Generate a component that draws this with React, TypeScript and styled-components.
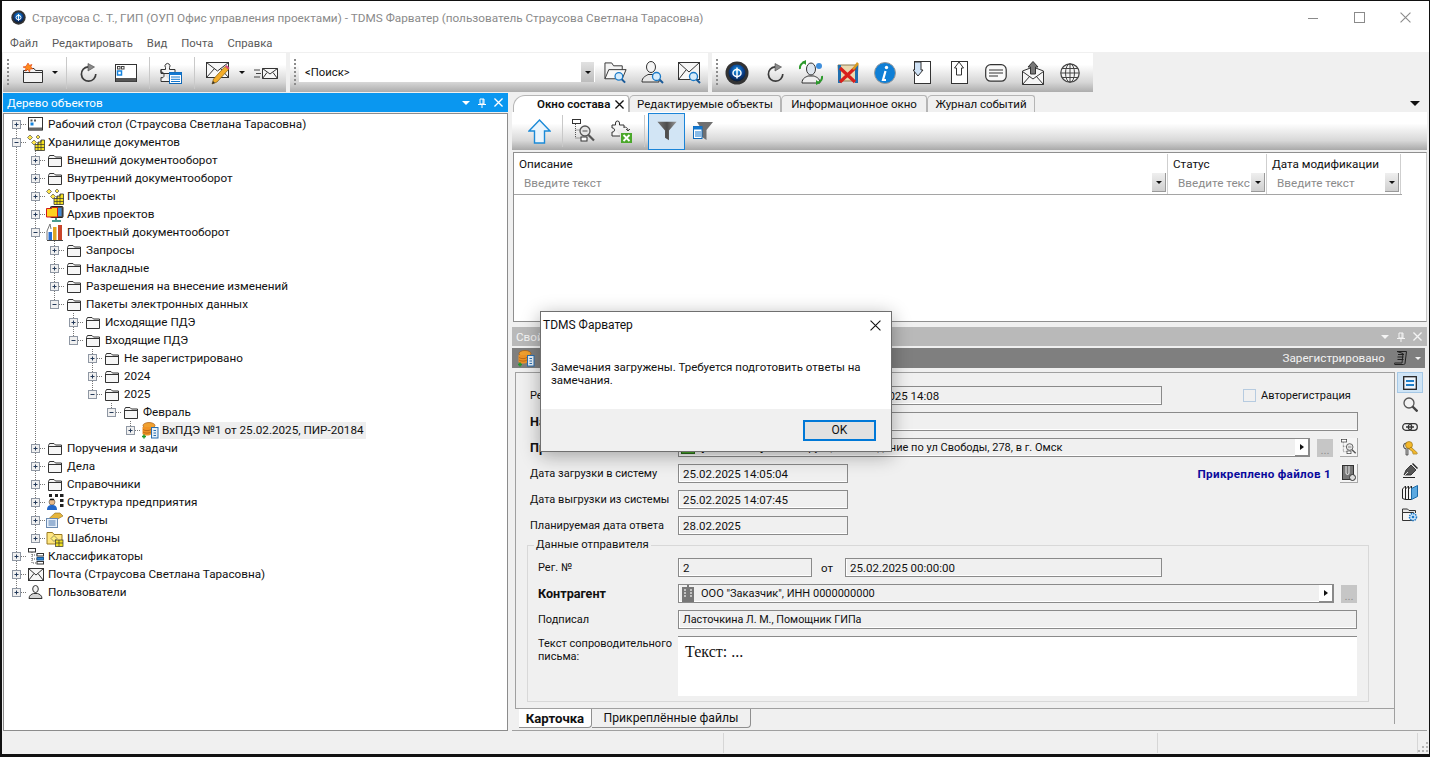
import React from "react";
import styled, {createGlobalStyle} from "styled-components";

const GlobalStyle = createGlobalStyle`
  html, body {
    margin: 0;
    padding: 0;
    background: #111;
  }
  * {
    box-sizing: border-box;
  }
`

const Window = styled.div`
  width: 1430px;
  height: 757px;
  display: flex;
  flex-direction: column;
  position: relative;
  overflow: hidden;
  background: #f0f0f0;
  border-style: solid;
  border-color: #111;
  border-width: 1px 1px 3px 2px;
  font-family: "Roboto", "Liberation Sans", sans-serif;
  font-size: 11.7px;
  color: #111;
`

const TitleBar = styled.div`
  height: 33px;
  flex: none;
  display: flex;
  align-items: center;
  background: #fff;
  padding-left: 9px;
  color: #8a8a8a;
  font-size: 11.75px;
`

const TitleText = styled.span`
  margin-left: 6px;
  flex: 1;
`

const WinButton = styled.div`
  width: 46px;
  height: 30px;
  display: flex;
  align-items: center;
  justify-content: center;
  margin-right: ${({$mr}: {$mr: number}) => $mr}px;
`

const MenuBar = styled.div`
  height: 18px;
  flex: none;
  display: flex;
  align-items: center;
  gap: 14px;
  padding-left: 8px;
  background: #fff;
  color: #5a5a5a;
  font-size: 11.3px;
`

const ToolStrip = styled.div`
  height: 41px;
  flex: none;
  display: flex;
  padding-left: 1px;
  background: #f0f0f0;
  padding-top: 1px;
`

const ToolSegment = styled.div`
  width: ${({$w}: {$w: number}) => $w}px;
  margin-right: 4px;
  height: 39px;
  display: flex;
  align-items: center;
  background: linear-gradient(#fff 0%, #fff 30%, #d6d6d6 75%, #adadad 100%);
`

const Grip = styled.div`
  width: 2px;
  height: 28px;
  margin-left: 4px;
  background: repeating-linear-gradient(#8c8c8c 0 2px, transparent 2px 4px);
`

const ToolButton = styled.div`
  flex: none;
  display: flex;
  align-items: center;
  justify-content: center;
  width: ${({$w}: {$w?: number, $ml?: number}) => $w ?? 24}px;
  height: 26px;
  margin-left: ${({$ml}: {$w?: number, $ml?: number}) => $ml ?? 0}px;
`

const ToolSep = styled.div`
  flex: none;
  width: 1px;
  height: 32px;
  background: #c9c9c9;
  margin-left: ${({$ml}: {$ml: number}) => $ml}px;
`

const SearchCombo = styled.div`
  width: 296px;
  height: 20px;
  margin-left: 3px;
  display: flex;
  align-items: center;
  justify-content: space-between;
  padding-left: 6px;
  background: #fff;
  margin-top: -1px;
  font-size: 11.3px;
`

const ComboArrow = styled.div`
  width: 13px;
  height: 20px;
  display: flex;
  align-items: center;
  justify-content: center;
  margin-right: 1px;
  background: linear-gradient(#e2e2e2, #bdbdbd);
`

const Caret = styled.span`
  width: 0;
  height: 0;
  flex: none;
  border-left: ${({$s, $c}: {$s: number, $c: string}) => $s}px solid transparent;
  border-right: ${({$s}: {$s: number, $c: string}) => $s}px solid transparent;
  border-top: ${({$s}: {$s: number, $c: string}) => $s}px solid ${({$c}: {$s: number, $c: string}) => $c};
`

const Main = styled.div`
  flex: 1;
  min-height: 0;
  display: flex;
`

const LeftPanel = styled.div`
  width: 505px;
  margin-left: 1px;
  flex: none;
  display: flex;
  flex-direction: column;
`

const DockHeader = styled.div`
  height: 19px;
  flex: none;
  display: flex;
  align-items: center;
  gap: 8px;
  padding: 0 5px 0 4px;
  background: ${({$blue}: {$blue: boolean}) => $blue ? "#0a97f0" : "#b9b9b9"};
  color: ${({$blue}: {$blue: boolean}) => $blue ? "#fff" : "#f4f4f4"};
`

const DockTitle = styled.span`
  flex: 1;
`

const TreeBox = styled.div`
  flex: 1;
  margin-top: 1px;
  border: 1px solid #8c8c8c;
  background: #fff;
  padding: 1px 0 0 3px;
`

const TreeRow = styled.div`
  height: 18px;
  display: flex;
  align-items: center;
`

const TreeIcon = styled.div`
  width: 19px;
  height: 18px;
  flex: none;
  display: flex;
  align-items: center;
  justify-content: center;
`

const TreeLabel = styled.span`
  margin-left: 1px;
  padding: 0 2px;
  height: 17px;
  line-height: 17px;
  white-space: nowrap;
  background: ${({$sel}: {$sel: boolean}) => $sel ? "#eeeeee" : "transparent"};
`

const RightPanel = styled.div`
  flex: 1;
  margin-left: 4px;
  margin-right: 3px;
  display: flex;
  flex-direction: column;
`

const TopPane = styled.div`
  height: 232px;
  flex: none;
  display: flex;
  flex-direction: column;
`

const TabStrip = styled.div`
  height: 19px;
  flex: none;
  padding-left: 1px;
  padding-top: 2px;
  display: flex;
  align-items: flex-end;
`

const DocTab = styled.div`
  height: 17px;
  width: ${({$w}: {$w: number, $on?: boolean}) => $w}px;
  flex: none;
  display: flex;
  align-items: center;
  justify-content: ${({$on}: {$w: number, $on?: boolean}) => $on ? "flex-start" : "center"};
  padding-left: ${({$on}: {$w: number, $on?: boolean}) => $on ? 23 : 0}px;
  gap: 5px;
  background: ${({$on}: {$w: number, $on?: boolean}) => $on ? "#fff" : "#f0f0f0"};
  border: 1px solid #b5b5b5;
  border-bottom: none;
  border-radius: ${({$on}: {$w: number, $on?: boolean}) => $on ? "12px 3px 0 0" : "5px 3px 0 0"};
  font-weight: ${({$on}: {$w: number, $on?: boolean}) => $on ? 600 : 400};
  font-size: 11.5px;
  white-space: nowrap;
`

const TabFill = styled.div`
  flex: 1;
  height: 17px;
  display: flex;
  align-items: center;
  justify-content: flex-end;
  padding-right: 7px;
`

const ContentBar = styled.div`
  height: 38px;
  flex: none;
  display: flex;
  align-items: center;
  background: linear-gradient(#fff 0%, #fff 30%, #d8d8d8 75%, #a9a9a9 100%);
`

const FilterToggle = styled.div`
  width: 37px;
  height: 37px;
  flex: none;
  margin-left: 3px;
  display: flex;
  align-items: center;
  justify-content: center;
  background: #d2e5f5;
  border: 1px solid #1a84d8;
`

const GridPane = styled.div`
  flex: 1;
  margin: 2px 0 3px 1px;
  background: #fff;
  border: 1px solid #8f8f8f;
  border-right-color: #c8c8c8;
  padding-top: 1px;
`

const GridHead = styled.div`
  display: flex;
  width: 888px;
  height: 41px;
  border-bottom: 1px solid #a5a5a5;
`

const GridCol = styled.div`
  width: ${({$w}: {$w: number}) => $w}px;
  flex: none;
  display: flex;
  flex-direction: column;
  border-right: 1px solid #cfcfcf;
  padding-left: 5px;
`

const GridTitle = styled.div`
  height: 19px;
  line-height: 21px;
`

const GridFilter = styled.div`
  height: 19px;
  display: flex;
  align-items: center;
  justify-content: space-between;
  padding-left: 5px;
  padding-right: 1px;
  color: #8b8b8b;
  overflow: hidden;
  white-space: nowrap;
`

const FilterArrow = styled.div`
  width: 14px;
  height: 19px;
  flex: none;
  display: flex;
  align-items: center;
  justify-content: center;
  background: linear-gradient(#efefef, #cfcfcf);
  border-right: 1px solid #9a9a9a;
  border-bottom: 1px solid #9a9a9a;
`

const PropsPane = styled.div`
  flex: 1;
  min-height: 0;
  display: flex;
  flex-direction: column;
  border-bottom: 1px solid #a0a0a0;
  padding-top: 2px;
`

const SubHeader = styled.div`
  height: 20px;
  flex: none;
  margin-top: 2px;
  margin-right: 2px;
  padding: 0 4px 0 5px;
  display: flex;
  align-items: center;
  gap: 5px;
  background: #7f7f7f;
  color: #f2f2f2;
`

const SubTitle = styled.span`
  flex: 1;
`

const SubState = styled.span`
  margin-right: 4px;
`

const SubCaret = styled.div`
  margin-left: 3px;
  display: flex;
`

const PropsBody = styled.div`
  flex: 1;
  min-height: 0;
  display: flex;
`

const CardColumn = styled.div`
  width: 879px;
  flex: none;
  margin-left: 3px;
  display: flex;
  flex-direction: column;
`

const FormCard = styled.div`
  flex: none;
  height: 337px;
  margin-top: 4px;
  border-top: 1px solid #a0a0a0;
  border-left: 1px solid #a0a0a0;
  border-bottom: 1px solid #a0a0a0;
  padding: 13px 36px 0 14px;
  display: flex;
  flex-direction: column;
  gap: 7px;
`

const FormRow = styled.div`
  height: 19px;
  flex: none;
  display: flex;
  align-items: center;
`

const FormLabel = styled.label`
  width: ${({$w}: {$w: number, $b?: boolean}) => $w}px;
  flex: none;
  line-height: 13px;
  font-size: ${({$b}: {$w: number, $b?: boolean}) => $b ? 12.6 : 11}px;
  font-weight: ${({$b}: {$w: number, $b?: boolean}) => $b ? 700 : 400};
`

const PlainLabel = styled(FormLabel)`
  white-space: nowrap;
`

const Field = styled.div`
  height: 19px;
  width: ${({$w}: {$w?: number}) => $w ? `${$w}px` : "auto"};
  flex: ${({$w}: {$w?: number}) => $w ? "none" : 1};
  display: flex;
  align-items: center;
  padding-left: 4px;
  background: #f0f0f0;
  border: 1px solid #8a8a8a;
  box-shadow: inset 1px -1px 0 #fff;
  font-size: 11.5px;
  white-space: nowrap;
  overflow: hidden;
`

const NameField = styled(Field)`
  font-size: 10.8px;
`

const RefField = styled(Field)`
  padding-left: 2px;
  padding-right: 0;
  gap: 6px;
`

const RefText = styled.span`
  flex: 1;
  font-size: 11px;
`

const RefArrow = styled.div`
  width: 14px;
  height: 17px;
  flex: none;
  display: flex;
  align-items: center;
  justify-content: center;
  background: #fff;
  border-right: 1px solid #8a8a8a;
  border-bottom: 1px solid #8a8a8a;
`

const Tri = styled.span`
  width: 0;
  height: 0;
  border-top: 3px solid transparent;
  border-bottom: 3px solid transparent;
  border-left: 4px solid #111;
`

const DotsButton = styled.div`
  width: 16px;
  height: 18px;
  flex: none;
  margin-left: 7px;
  display: flex;
  align-items: flex-end;
  justify-content: center;
  background: #c6c6c6;
  color: #8f8f8f;
  line-height: 14px;
`

const IconButton = styled.div`
  width: 18px;
  height: 19px;
  flex: none;
  margin-left: ${({$ml}: {$ml: number}) => $ml}px;
  display: flex;
  align-items: center;
  justify-content: center;
  background: #f5f5f5;
  border-right: 1px solid #a8a8a8;
  border-bottom: 1px solid #a8a8a8;
`

const FromLabel = styled.span`
  width: 33px;
  flex: none;
  padding-left: 9px;
  font-size: 11.5px;
`

const AutoCheck = styled.div`
  width: 13px;
  height: 13px;
  flex: none;
  margin-left: 81px;
  border: 1px solid #b6cbe0;
  background: #f0f0f0;
`

const AutoLabel = styled.span`
  margin-left: 5px;
  font-size: 11px;
`

const AttachLink = styled.span`
  flex: 1;
  text-align: right;
  font-weight: 700;
  color: #0a0a9c;
  letter-spacing: 0.3px;
`

const SenderGroup = styled.fieldset`
  margin: -4px -11px 0 -3px;
  height: 164px;
  padding: 6px 11px 0 10px;
  border: 1px solid #d8d8d8;
  display: flex;
  flex-direction: column;
  gap: 7px;
`

const SenderLegend = styled.legend`
  margin-left: -4px;
  padding: 0 2px;
  line-height: 14px;
  font-size: 11.3px;
`

const LetterRow = styled.div`
  height: 60px;
  flex: none;
  display: flex;
  padding-top: 1px;
`

const LetterBox = styled.div`
  flex: 1;
  margin-top: -1px;
  background: #fff;
  border-top: 1px solid #8a8a8a;
  padding: 6px 0 0 7px;
  font-family: "Liberation Serif", serif;
  font-size: 16px;
`

const CardTabs = styled.div`
  display: flex;
  padding-left: 4px;
  margin-top: 0;
`

const CardTab = styled.div`
  height: 19px;
  width: ${({$w}: {$w: number, $on?: boolean}) => $w}px;
  display: flex;
  align-items: center;
  justify-content: center;
  background: ${({$on}: {$w: number, $on?: boolean}) => $on ? "#fff" : "#f0f0f0"};
  font-weight: ${({$on}: {$w: number, $on?: boolean}) => $on ? 700 : 400};
  border-right: 1px solid #8f8f8f;
  border-bottom: 1px solid #8f8f8f;
  border-radius: 0 0 4px 0;
  font-size: ${({$on}: {$w: number, $on?: boolean}) => $on ? 13.2 : 12.2}px;
`

const SideBar = styled.div`
  width: 33px;
  flex: none;
  margin-top: 4px;
  margin-bottom: 6px;
  border-left: 1px solid #a0a0a0;
  padding-left: 2px;
  display: flex;
  flex-direction: column;
  gap: 1px;
`

const SideButton = styled.div`
  width: 26px;
  height: 21px;
  flex: none;
  display: flex;
  align-items: center;
  justify-content: center;
  background: ${({$on}: {$on?: boolean}) => $on ? "#cfe4f5" : "transparent"};
  border: 1px solid ${({$on}: {$on?: boolean}) => $on ? "#a5c8e6" : "transparent"};
`

const StatusBar = styled.div`
  height: 23px;
  flex: none;
  display: flex;
  align-items: center;
  padding-left: 721px;
`

const StatusCell = styled.div`
  width: ${({$w}: {$w: number}) => $w}px;
  height: 20px;
  flex: none;
  border-left: 1px solid #d6d6d6;
`

const SizeGrip = styled.div`
  flex: 1;
  height: 20px;
  display: flex;
  justify-content: flex-end;
  align-items: flex-end;
  border-left: 1px solid #d6d6d6;
  padding-right: 2px;
`

const Dialog = styled.div`
  position: absolute;
  left: 538px;
  top: 310px;
  width: 352px;
  height: 141px;
  display: flex;
  flex-direction: column;
  background: #fff;
  border: 1px solid #6f6f6f;
  box-shadow: 0 4px 18px rgba(0, 0, 0, 0.32);
`

const DialogTitle = styled.div`
  height: 26px;
  flex: none;
  display: flex;
  align-items: center;
  justify-content: space-between;
  padding: 0 10px 0 2px;
  font-size: 12px;
`

const DialogBody = styled.div`
  flex: 1;
  padding: 23px 24px 0 10px;
  line-height: 13px;
  font-size: 11.5px;
`

const DialogFooter = styled.div`
  height: 42px;
  flex: none;
  display: flex;
  align-items: center;
  justify-content: flex-end;
  padding-right: 15px;
  background: #f0f0f0;
`

const OkButton = styled.button`
  width: 73px;
  height: 21px;
  padding: 0;
  font: inherit;
  font-size: 12px;
  color: #111;
  background: #e1e1e1;
  border: 2px solid #0078d7;
`

type TreeNode = { l: number, t: string, i: string, open?: boolean, sel?: boolean }

const Ln = "#333";

function Folder() {
    return <svg width="16" height="13" viewBox="0 0 16 13"><path d="M1.500 12.500V3.500L2.500 1.500H7L8.500 3H14.500V12.500Z" fill="#f6f6f6" stroke={Ln}/><path d="M1.500 4.500H14.500" stroke={Ln}/></svg>;
}

function Cubes() {
    return <svg width="18" height="17" viewBox="0 0 18 17">
        <path d="M2 1l2.500 2.500L2 6-.5 3.500z M10 1l2 2-2 2-2-2z M6 6l2.500 2.500L6 11 3.500 8.500z" transform="translate(1 0)" fill="#ffe64d" stroke="#555" strokeWidth=".7"/>
        <path d="M8 10.500h3V8h3V6h3.500v10.500H8z" fill="#f6e220" stroke="#333" strokeWidth=".8"/>
        <path d="M8 13.500h9.500M11 8v8.500M14 6v10.500M11 10.500h6.500" stroke="#333" strokeWidth=".7"/>
    </svg>;
}

function Desktop() {
    return <svg width="15" height="14" viewBox="0 0 15 14"><rect x=".5" y=".5" width="14" height="12.500" fill="#fff" stroke={Ln}/><rect x="1" y="10.500" width="13" height="3" fill="#666"/><rect x="2.500" y="2.500" width="2" height="2" fill="#555"/><rect x="6" y="2.500" width="2" height="2" fill="#555"/><rect x="2.500" y="5.500" width="3" height="3" fill="#1583dd"/></svg>;
}

function Monitors() {
    return <svg width="18" height="17" viewBox="0 0 18 17"><rect x="4.500" y=".5" width="12.500" height="11" rx="1" fill="#555" stroke="#222"/><rect x="6" y="2" width="9.500" height="8" fill="#3f87d6"/><path d="M.5 2.500h5l1-1h5v9.500H.5z" fill="#ffd21e" stroke="#d01818"/><path d="M10 12v2M6 15h9" stroke="#0f7c6c" strokeWidth="1.500"/></svg>;
}

function Chart() {
    return <svg width="18" height="18" viewBox="0 0 18 18"><path d="M1 17V8l3-7 1 5" fill="none" stroke="#777"/><rect x="2.500" y="9" width="3.500" height="8" fill="#2a6fd0"/><rect x="7" y="4" width="3.500" height="13" fill="#e0a420"/><rect x="12" y="2" width="4" height="15" fill="#c8452a"/><path d="M1 17.500h16" stroke="#444"/></svg>;
}

function Package() {
    return <svg width="18" height="18" viewBox="0 0 18 18"><ellipse cx="8" cy="4.500" rx="6" ry="3" fill="#f0a030" stroke="#a85a10" strokeWidth=".7"/><path d="M1.500 6v7c2 2 7 2 9 0V6z" fill="#ef9326"/><path d="M2 8.500c2 1.500 6 1.500 8 0M2 11c2 1.500 6 1.500 8 0" stroke="#a85a10" fill="none" strokeWidth=".7"/><rect x="10.500" y="6.500" width="6.500" height="10.500" fill="#e8f0f8" stroke="#2a6fb0"/><path d="M12.500 9.500h2.500M12.500 12h2.500M12.500 14.500h2.500" stroke="#2a6fb0"/><path d="M1 15.500h4M3 13.500v4" stroke="#1f9a2b" strokeWidth="1.500"/></svg>;
}

function OrgChart() {
    return <svg width="18" height="18" viewBox="0 0 18 18"><circle cx="6" cy="9" r="3" fill="#e7b98a" stroke="#333" strokeWidth=".5"/><path d="M1 17c0-4 2-5 5-5s5 1 5 5z" fill="#2367c8"/><path d="M4 6.500h4" stroke="#111" strokeWidth="1.500"/><rect x="3" y="1" width="3" height="3" fill="#222"/><rect x="9" y="1" width="3" height="3" fill="#222"/><rect x="14" y="1" width="3.500" height="3" fill="#222"/><rect x="14" y="6" width="3.500" height="3" fill="#222"/><rect x="14" y="11" width="3.500" height="3" fill="#222"/></svg>;
}

function Report() {
    return <svg width="18" height="16" viewBox="0 0 18 16"><path d="M3 6.500L9 1h5l3 3-7 4z" fill="#e6b53a" stroke="#8a6a20" strokeWidth=".6"/><rect x=".5" y="6.500" width="11" height="9" fill="#e8f0fa" stroke="#6a8ab0"/><path d="M2.500 9h7M2.500 11h7M2.500 13h7" stroke="#4a78b0"/></svg>;
}

function TemplateFolder() {
    return <svg width="18" height="17" viewBox="0 0 18 17"><path d="M1 14V2.500h5.500l1.500 2h8V14z" fill="#ffe680" stroke="#9a7a20"/><path d="M5 8.500l3-3 3 3-3 3z" fill="#fff07a" stroke="#555" strokeWidth=".6"/><rect x="9.500" y="10" width="7.500" height="6.500" fill="#f1e020" stroke="#333" strokeWidth=".7"/><path d="M13 10v6.500M9.500 13h7.500" stroke="#333" strokeWidth=".7"/></svg>;
}

function Classifier() {
    return <svg width="16" height="17" viewBox="0 0 16 17"><rect x=".5" y=".5" width="7" height="3.500" fill="#fff" stroke={Ln}/><rect x="9" y="5.500" width="6.500" height="2.500" fill="#fff" stroke={Ln}/><rect x="9" y="9.500" width="6.500" height="2.500" fill="#2b87d8" stroke="#1a5a98"/><rect x="9" y="13.500" width="6.500" height="2.500" fill="#fff" stroke={Ln}/><path d="M4 4v11h5M4 7h5M4 11h5" stroke="#555" strokeDasharray="1 1" fill="none"/></svg>;
}

function Mail({w = 16, h = 13}: { w?: number, h?: number }) {
    return <svg width={w} height={h} viewBox="0 0 16 13"><rect x=".5" y=".5" width="15" height="12" fill="#f6f6f6" stroke={Ln}/><path d="M.5.5L8 7l7.500-6.500M.5 12.500L6 5.500M15.500 12.500L10 5.500" fill="none" stroke={Ln}/></svg>;
}

function User({w = 15, h = 14}: { w?: number, h?: number }) {
    return <svg width={w} height={h} viewBox="0 0 15 14"><ellipse cx="7.500" cy="4" rx="2.800" ry="3.500" fill="#f4f4f4" stroke={Ln}/><path d="M1 13.500c0-3.500 3-4.500 4.500-5h4c1.500.5 4.500 1.500 4.500 5z" fill="#d4d4d4" stroke={Ln}/></svg>;
}

function NewFolderIcon() {
    return <svg width="22" height="22" viewBox="0 0 22 22"><path d="M1.500 20.500V8.500h3l1.500-2h6l1.500 2h7v12z" fill="#f3f3f3" stroke={Ln}/><path d="M1.500 10.500h19.500" stroke={Ln}/><path d="M6 1l1.300 2.300L10 2.500 8.800 5l2.200 1.800-2.800.3L7.500 10 6 7.500 3 9l1-2.800L1 5l3-.7z" fill="#ff8a1c" stroke="#e04010" strokeWidth=".6"/></svg>;
}

function RefreshIcon({w = 18, h = 20}: { w?: number, h?: number }) {
    return <svg width={w} height={h} viewBox="0 0 18 20"><path d="M8 3.800A7.200 7.200 0 1 0 15.800 11" fill="none" stroke="#3c3c3c" strokeWidth="1.700"/><path d="M8 .5L14.500 4 8 8z" fill="#8b8b8b" stroke="#444" strokeWidth=".6"/></svg>;
}

function WindowIcon() {
    return <svg width="22" height="18" viewBox="0 0 22 18"><rect x=".5" y=".5" width="21" height="17" fill="#fff" stroke={Ln}/><rect x="1" y="14" width="20" height="3.500" fill="#555"/><rect x="2.500" y="2.500" width="2.500" height="2.500" fill="none" stroke="#444"/><rect x="6.500" y="2.500" width="2.500" height="2.500" fill="none" stroke="#444"/><rect x="2.500" y="7" width="4" height="4" fill="#fff" stroke="#1583dd" strokeWidth="1.500"/></svg>;
}

function PuzzleBlock() {
    return <svg width="22" height="23" viewBox="0 0 22 23"><path d="M1 8.500h4.500v-2a2.500 2.500 0 1 1 4 0v2H15v4H1zM1 8.500v3a2 2 0 0 1 3 2v1a2 2 0 0 1-3 2v4h9" fill="#f5f5f5" stroke={Ln}/><rect x="9.500" y="11.500" width="12" height="11" fill="#fff" stroke="#0f68b8"/><rect x="9.500" y="11.500" width="12" height="2.500" fill="#1478d0"/><path d="M11 16h9M11 18.300h9M11 20.500h9" stroke="#1478d0"/></svg>;
}

function MailPencil() {
    return <svg width="24" height="24" viewBox="0 0 24 24"><rect x=".5" y="1.500" width="22" height="15" fill="#f8f8f8" stroke={Ln}/><path d="M.5 1.500L11.500 10l11-8.500M.5 16.500l8-9M22.500 16.500l-8-9" fill="none" stroke={Ln}/><path d="M6 23l1.500-5L19 5.500l3.500 3L11 21z" fill="#f3ad2a" stroke="#7a5a10" strokeWidth=".7"/><path d="M19 5.500l1.500-1.500 3 3-1 1.500z" fill="#d84a7a"/><path d="M6 23l1-3 2 2z" fill="#333"/></svg>;
}

function MailSend() {
    return <svg width="24" height="16" viewBox="0 0 24 16"><path d="M8.500 3.500h15v10h-15z" fill="#f6f6f6" stroke={Ln}/><path d="M8.500 3.500L16 9l7.500-5.500M8.500 13.500L13 7.500M23.500 13.500L19 7.500" fill="none" stroke={Ln}/><path d="M0 5h6M2 8.500h5M0 12h6" stroke="#444"/></svg>;
}

function Lens({x, y}: { x: number, y: number }) {
    return <g transform={`translate(${x} ${y})`}><circle cx="4.500" cy="4.500" r="4" fill="#d7ecfb" stroke="#1a7ac8" strokeWidth="1.300"/><path d="M7.500 7.500L11 11" stroke="#1a5a98" strokeWidth="2"/></g>;
}

function FolderSearch() {
    return <svg width="25" height="24" viewBox="0 0 25 24"><path d="M1 18V1.500h7l2 3h9v4" fill="#f4f4f4" stroke={Ln}/><path d="M1 18l4-9.500h18L19 18z" fill="#f8f8f8" stroke={Ln}/><Lens x={11} y={11}/></svg>;
}

function UserSearch() {
    return <svg width="24" height="24" viewBox="0 0 24 24"><ellipse cx="10" cy="6" rx="4.500" ry="5.500" fill="#f4f4f4" stroke={Ln}/><path d="M1 21c0-5 4-6 6-7.500h6c2 1 5 3 5 7.500z" fill="#e8e8e8" stroke={Ln}/><Lens x={11} y={11}/></svg>;
}

function MailSearch() {
    return <svg width="24" height="24" viewBox="0 0 24 24"><rect x=".5" y="1.500" width="21" height="17" fill="#f6f6f6" stroke={Ln}/><path d="M.5 1.500L11 11 21.500 1.500M.5 18.500L8 9" fill="none" stroke={Ln}/><Lens x={11} y={11}/></svg>;
}

function FarvaterLogo({s = 24}: { s?: number }) {
    return <svg width={s} height={s} viewBox="0 0 24 24"><defs><radialGradient id="fv" cx=".5" cy=".35" r=".65"><stop offset="0" stopColor="#1ea0f0"/><stop offset=".6" stopColor="#0a3f8c"/><stop offset="1" stopColor="#0a1a30"/></radialGradient></defs><circle cx="12" cy="12" r="11.500" fill="#333"/><circle cx="12" cy="12" r="8.500" fill="url(#fv)"/><ellipse cx="12" cy="12" rx="4" ry="3.500" fill="none" stroke="#fff" strokeWidth="1.500"/><path d="M12 6.500v11" stroke="#fff" strokeWidth="1.500"/></svg>;
}

function UserSync() {
    return <svg width="24" height="25" viewBox="0 0 24 25"><ellipse cx="12" cy="9" rx="4.500" ry="6" fill="#dfe6ee" stroke={Ln}/><path d="M3 23c0-5 4-6 6-7h6c2 1 6 2 6 7z" fill="#eee" stroke={Ln}/><path d="M1 9a6 6 0 0 1 6-7" fill="none" stroke="#2c9a2c" strokeWidth="2"/><path d="M7 0v5L3 2z" fill="#2c9a2c"/><path d="M23 16a6 6 0 0 1-6 7" fill="none" stroke="#2c9a2c" strokeWidth="2"/><path d="M17 25v-5l4 3z" fill="#2c9a2c"/><circle cx="20" cy="6" r="3" fill="#3f8fdc"/></svg>;
}

function RedCross() {
    return <svg width="23" height="24" viewBox="0 0 23 24"><path d="M1 4h20l-1 16H2z" fill="#ead9b0" stroke="#8a7a50"/><rect x="1" y="4" width="3" height="18" fill="#1f6fb0"/><rect x="18" y="4" width="3" height="18" fill="#1f6fb0"/><path d="M3 7l15 14M18 7L3 21" stroke="#d8201c" strokeWidth="3.200"/><path d="M15 8l5-7 2 2-5 6z" fill="#d89a20"/></svg>;
}

function InfoIcon() {
    return <svg width="22" height="22" viewBox="0 0 22 22"><circle cx="11" cy="11" r="10.500" fill="#0f7fd6" stroke="#9a9a9a"/><circle cx="12.500" cy="5.500" r="1.700" fill="#fff"/><path d="M11.500 9L9 18h3" fill="none" stroke="#fff" strokeWidth="2.200"/></svg>;
}

function DocDown() {
    return <svg width="18" height="24" viewBox="0 0 18 24"><rect x="1.500" y=".5" width="16" height="22" fill="#fff" stroke={Ln}/><path d="M1.500 1v8H0l5 6 5-6H8V1z" fill="#cfe2f6" stroke={Ln}/></svg>;
}

function DocUp() {
    return <svg width="17" height="24" viewBox="0 0 17 24"><rect x=".5" y=".5" width="16" height="22" fill="#fff" stroke={Ln}/><path d="M8 1l4.500 6H10.500v7h-5V7H3.500z" fill="#fff" stroke={Ln}/></svg>;
}

function Comment() {
    return <svg width="22" height="18" viewBox="0 0 22 18"><rect x=".7" y=".7" width="20.500" height="16.500" rx="5" fill="#f9f9f9" stroke={Ln} strokeWidth="1.200"/><path d="M4 6h14M4 9h14M4 12h9" stroke={Ln}/></svg>;
}

function MailUp() {
    return <svg width="22" height="24" viewBox="0 0 22 24"><path d="M.5 10L11 6l10.500 4v13.500H.5z" fill="#f6f6f6" stroke={Ln}/><path d="M.5 10.500L11 18l10.500-7.500M.5 23.500L8 15M21.500 23.500L14 15" fill="none" stroke={Ln}/><path d="M11 .5L16 6h-2.500v7h-5V6H6z" fill="#777" stroke="#333"/></svg>;
}

function Globe() {
    return <svg width="20" height="20" viewBox="0 0 20 20" fill="none" stroke="#444"><circle cx="10" cy="10" r="9.200" fill="#f4f4f4" strokeWidth="1.200"/><ellipse cx="10" cy="10" rx="4.500" ry="9.200"/><path d="M10 1v18M1 10h18M2 5.500h16M2 14.500h16"/></svg>;
}

function UpArrow() {
    return <svg width="23" height="25" viewBox="0 0 23 25"><path d="M11.500 1L22 12h-5.500v12h-10V12H1z" fill="#eaf5fd" stroke="#1a8ad8" strokeWidth="1.400"/></svg>;
}

function TreeSearch({w = 24, h = 24}: { w?: number, h?: number }) {
    return <svg width={w} height={h} viewBox="0 0 24 24"><rect x=".5" y=".5" width="8" height="4" fill="#fff" stroke={Ln}/><path d="M3.500 5v14h6M3.500 11h5" stroke="#555" strokeDasharray="1 1" fill="none"/><rect x="9" y="18" width="6" height="4" fill="#fff" stroke={Ln}/><circle cx="13" cy="12" r="5" fill="#e6e6e6" stroke="#555" strokeWidth="1.300"/><path d="M10.500 12h5" stroke="#555"/><path d="M16.500 16l5.500 5.500" stroke="#555" strokeWidth="2.200"/></svg>;
}

function PuzzleExcel() {
    return <svg width="21" height="24" viewBox="0 0 21 24"><path d="M1 6h3.500V4a2 2 0 1 1 4 0v2H13v3M1 6v3a2 2 0 0 1 2.500 2 2 2 0 0 1-2.500 2v4h8" fill="#f5f5f5" stroke={Ln}/><path d="M13 8c2 0 4 1 4 3M15 10l2 2 2-2" fill="none" stroke="#444"/><rect x="10" y="14" width="11" height="10" fill="#4aa82a"/><path d="M12.500 16l6 6M18.500 16l-6 6" stroke="#fff" strokeWidth="1.800"/></svg>;
}

function FilterIcon({w = 20, h = 20}: { w?: number, h?: number }) {
    return <svg width={w} height={h} viewBox="0 0 25 25"><defs><linearGradient id="fl" x1="0" x2="1" y1="0" y2="0"><stop offset="0" stopColor="#777"/><stop offset=".5" stopColor="#4c4c4c"/><stop offset="1" stopColor="#999"/></linearGradient></defs><path d="M.5 1h24L15 12v12l-5-3v-9z" fill="url(#fl)"/></svg>;
}

function FilterDoc() {
    return <svg width="20" height="20" viewBox="0 0 20 20"><path d="M4 1h16l-6.500 8v10L9 16V9z" fill="#707070"/><rect x=".5" y="5.500" width="8.500" height="12" fill="#fff" stroke="#0f68b8"/><rect x=".5" y="5.500" width="8.500" height="3" fill="#1478d0"/><path d="M2 11h6M2 13h6M2 15h6" stroke="#1478d0"/></svg>;
}

function DocScroll() {
    return <svg width="13" height="14" viewBox="0 0 13 14"><path d="M3 .5h9.500L11 12.500c-.3 1-1 1-1.500 1H1c-.5 0-1-.5-.5-1.500H8L9 2.500z" fill="#7f7f7f" stroke="#222"/><path d="M4 3.500h6M3.500 6h6M3.500 8.500h6" stroke="#222"/></svg>;
}

function CardIcon() {
    return <svg width="14" height="14" viewBox="0 0 14 14"><rect x=".7" y=".7" width="12.600" height="12.600" fill="#eef5fb" stroke="#222" strokeWidth="1.300"/><rect x="3" y="4" width="8" height="2" fill="#1f7fc8"/><rect x="3" y="8" width="8" height="2" fill="#1f7fc8"/></svg>;
}

function Magnifier() {
    return <svg width="15" height="15" viewBox="0 0 15 15"><circle cx="6" cy="6" r="5" fill="#f2f2f2" stroke="#555" strokeWidth="1.300"/><path d="M9.500 9.500l5 5" stroke="#444" strokeWidth="2.400"/></svg>;
}

function LinkIcon() {
    return <svg width="16" height="8" viewBox="0 0 16 8" fill="none" stroke="#333" strokeWidth="1.200"><rect x=".7" y=".7" width="9" height="6.600" rx="3"/><rect x="6.300" y=".7" width="9" height="6.600" rx="3"/><path d="M4 4h8" strokeWidth="1.500"/></svg>;
}

function KeyIcon() {
    return <svg width="15" height="15" viewBox="0 0 15 15"><circle cx="3.500" cy="5" r="3" fill="#ddd" stroke="#444"/><path d="M5 7v7l-2 0V8" fill="#bbb" stroke="#444" strokeWidth=".8"/><circle cx="6" cy="4" r="3.500" fill="#f3b72a" stroke="#8a6a10" strokeWidth=".6"/><path d="M8 6l6.500 6-1.500 1.500-1-1-1 1-1.500-1.500 .5-1L6 8z" fill="#f3b72a" stroke="#8a6a10" strokeWidth=".6"/></svg>;
}

function PenIcon() {
    return <svg width="15" height="15" viewBox="0 0 15 15"><path d="M1 12l2-5 5-5 5 5-5 5z" fill="#555" stroke="#222" strokeWidth=".8"/><path d="M9 1l1-1 5 5-1 1z" fill="#222"/><path d="M0 14.500h12" stroke="#222" strokeWidth="1"/><path d="M1 13l4-4" stroke="#ddd"/></svg>;
}

function BooksIcon() {
    return <svg width="16" height="15" viewBox="0 0 16 15"><path d="M.5 4l3-3v13.500l-3-1zM3.500 4l3-3v13.500h-3zM6.500 4l3-3v13.500h-3z" fill="#f6f6f6" stroke="#222"/><path d="M9.500 3.500l6-3v11l-6 3z" fill="#5aa8e0" stroke="#1a6aa8"/></svg>;
}

function FolderGear() {
    return <svg width="16" height="15" viewBox="0 0 16 15"><path d="M.5 13V2h5l1.500 1.500h6.500V6" fill="#e6e6e6" stroke="#333"/><path d="M.5 5.500h11v8H.5z" fill="#f4f4f4" stroke="#333"/><circle cx="11" cy="10" r="3.500" fill="#cfe6fa" stroke="#1a78c8" strokeWidth="1.500" strokeDasharray="1.500 .8"/><circle cx="11" cy="10" r="1.300" fill="#1a78c8"/></svg>;
}

function Pin({c}: { c: string }) {
    return <svg width="8" height="10" viewBox="0 0 8 10" fill="none" stroke={c}><path d="M2 1h4v5H2zM0 6.500h8M4 6.500V10M5 1v5" /></svg>;
}

function Cross({s, c, w = 1.500}: { s: number, c: string, w?: number }) {
    return <svg width={s} height={s} viewBox="0 0 10 10" stroke={c} strokeWidth={w}><path d="M.5.5l9 9M9.500.5l-9 9"/></svg>;
}

const treeIcons: Record<string, React.ReactNode> = {
    desktop: <Desktop/>, cubes: <Cubes/>, folder: <Folder/>, monitors: <Monitors/>, chart: <Chart/>,
    pack: <Package/>, org: <OrgChart/>, report: <Report/>, tpl: <TemplateFolder/>,
    tree: <Classifier/>, mail: <Mail/>, user: <User/>,
};

const nodes: TreeNode[] = [
    {l: 0, t: "Рабочий стол (Страусова Светлана Тарасовна)", i: "desktop"},
    {l: 0, t: "Хранилище документов", i: "cubes", open: true},
    {l: 1, t: "Внешний документооборот", i: "folder"},
    {l: 1, t: "Внутренний документооборот", i: "folder"},
    {l: 1, t: "Проекты", i: "cubes"},
    {l: 1, t: "Архив проектов", i: "monitors"},
    {l: 1, t: "Проектный документооборот", i: "chart", open: true},
    {l: 2, t: "Запросы", i: "folder"},
    {l: 2, t: "Накладные", i: "folder"},
    {l: 2, t: "Разрешения на внесение изменений", i: "folder"},
    {l: 2, t: "Пакеты электронных данных", i: "folder", open: true},
    {l: 3, t: "Исходящие ПДЭ", i: "folder"},
    {l: 3, t: "Входящие ПДЭ", i: "folder", open: true},
    {l: 4, t: "Не зарегистрировано", i: "folder"},
    {l: 4, t: "2024", i: "folder"},
    {l: 4, t: "2025", i: "folder", open: true},
    {l: 5, t: "Февраль", i: "folder", open: true},
    {l: 6, t: "ВхПДЭ №1 от 25.02.2025, ПИР-20184", i: "pack", sel: true},
    {l: 1, t: "Поручения и задачи", i: "folder"},
    {l: 1, t: "Дела", i: "folder"},
    {l: 1, t: "Справочники", i: "folder"},
    {l: 1, t: "Структура предприятия", i: "org"},
    {l: 1, t: "Отчеты", i: "report"},
    {l: 1, t: "Шаблоны", i: "tpl"},
    {l: 0, t: "Классификаторы", i: "tree"},
    {l: 0, t: "Почта (Страусова Светлана Тарасовна)", i: "mail"},
    {l: 0, t: "Пользователи", i: "user"},
];

// is there another node of this level further down under the same parent
function hasNext(index: number, level: number) {
    for (let j = index + 1; j < nodes.length; j++) {
        if (nodes[j].l < level) return false;
        if (nodes[j].l === level) return true;
    }
    return false;
}

function TreeGuide({on}: { on: boolean }) {
    return <svg width="19" height="18" style={{flex: "none"}}>{on && <path d="M9.500 0V18" stroke="#777" strokeDasharray="1 1"/>}</svg>;
}

function TreeToggle({open, top, bottom}: { open?: boolean, top: boolean, bottom: boolean }) {
    return <svg width="19" height="18" viewBox="0 0 19 18" style={{flex: "none"}}>
        {top && <path d="M9.500 0V5" stroke="#777" strokeDasharray="1 1"/>}
        {bottom && <path d="M9.500 14V18" stroke="#777" strokeDasharray="1 1"/>}
        <path d="M14 9.500H19" stroke="#777" strokeDasharray="1 1"/>
        <rect x="5.500" y="5.500" width="8" height="8" fill="#f0f0f0" stroke="#8f97a3"/>
        <path d={open ? "M7.500 9.500H11.500" : "M7.500 9.500H11.500M9.500 7.500V11.500"} stroke="#243a5a"/>
    </svg>;
}

function Tree() {
    return (
        <TreeBox>
            {nodes.map((n, i) => (
                <TreeRow key={i}>
                    {Array.from({length: n.l}, (_, level) => <TreeGuide key={level} on={hasNext(i, level)}/>)}
                    <TreeToggle open={n.open} top={i > 0} bottom={hasNext(i, n.l)}/>
                    <TreeIcon>{treeIcons[n.i]}</TreeIcon>
                    <TreeLabel $sel={!!n.sel}>{n.t}</TreeLabel>
                </TreeRow>
            ))}
        </TreeBox>
    );
}

function Toolbars() {
    return (
        <ToolStrip>
            <ToolSegment $w={283}>
                <Grip/>
                <ToolButton $w={24} $ml={12}><NewFolderIcon/></ToolButton>
                <ToolButton $w={8} $ml={6}><Caret $s={3} $c="#111"/></ToolButton>
                <ToolSep $ml={7}/>
                <ToolButton $ml={10}><RefreshIcon/></ToolButton>
                <ToolButton $ml={13}><WindowIcon/></ToolButton>
                <ToolSep $ml={11}/>
                <ToolButton $ml={9}><PuzzleBlock/></ToolButton>
                <ToolSep $ml={11}/>
                <ToolButton $ml={11}><MailPencil/></ToolButton>
                <ToolButton $w={8} $ml={8}><Caret $s={3} $c="#111"/></ToolButton>
                <ToolButton $ml={8}><MailSend/></ToolButton>
            </ToolSegment>
            <ToolSegment $w={418}>
                <Grip/>
                <SearchCombo>
                    &lt;Поиск&gt;
                    <ComboArrow><Caret $s={3} $c="#111"/></ComboArrow>
                </SearchCombo>
                <ToolButton $ml={9}><FolderSearch/></ToolButton>
                <ToolButton $ml={13}><UserSearch/></ToolButton>
                <ToolButton $ml={13}><MailSearch/></ToolButton>
            </ToolSegment>
            <ToolSegment $w={381}>
                <Grip/>
                <ToolButton $ml={7}><FarvaterLogo/></ToolButton>
                <ToolButton $ml={15}><RefreshIcon/></ToolButton>
                <ToolButton $ml={11}><UserSync/></ToolButton>
                <ToolButton $ml={13}><RedCross/></ToolButton>
                <ToolButton $ml={13}><InfoIcon/></ToolButton>
                <ToolButton $ml={13}><DocDown/></ToolButton>
                <ToolButton $ml={13}><DocUp/></ToolButton>
                <ToolButton $ml={13}><Comment/></ToolButton>
                <ToolButton $ml={13}><MailUp/></ToolButton>
                <ToolButton $ml={13}><Globe/></ToolButton>
            </ToolSegment>
        </ToolStrip>
    );
}

function FilterCell({w, title, hint = "Введите текст"}: { w: number, title: string, hint?: string }) {
    return (
        <GridCol $w={w}>
            <GridTitle>{title}</GridTitle>
            <GridFilter>{hint}<FilterArrow><Caret $s={3} $c="#111"/></FilterArrow></GridFilter>
        </GridCol>
    );
}

function ContentPane() {
    return (
        <TopPane>
            <TabStrip>
                <DocTab $w={116} $on>Окно состава <Cross s={9} c="#111"/></DocTab>
                <DocTab $w={152}>Редактируемые объекты</DocTab>
                <DocTab $w={146}>Информационное окно</DocTab>
                <DocTab $w={108}>Журнал событий</DocTab>
                <TabFill><Caret $s={5} $c="#111"/></TabFill>
            </TabStrip>
            <ContentBar>
                <ToolButton $ml={15}><UpArrow/></ToolButton>
                <ToolSep $ml={11}/>
                <ToolButton $ml={9}><TreeSearch/></ToolButton>
                <ToolButton $ml={13}><PuzzleExcel/></ToolButton>
                <ToolSep $ml={11}/>
                <FilterToggle><FilterIcon/></FilterToggle>
                <ToolButton $ml={6}><FilterDoc/></ToolButton>
            </ContentBar>
            <GridPane>
                <GridHead>
                    <FilterCell w={654} title="Описание"/>
                    <FilterCell w={99} title="Статус" hint="Введите текс"/>
                    <FilterCell w={134} title="Дата модификации"/>
                </GridHead>
            </GridPane>
        </TopPane>
    );
}

function CardForm() {
    return (
        <FormCard>
            <FormRow>
                <PlainLabel $w={148}>Рег. №</PlainLabel>
                <Field $w={134}>1</Field>
                <FromLabel>от</FromLabel>
                <Field $w={317}>25.02.2025 14:08</Field>
                <AutoCheck/>
                <AutoLabel>Авторегистрация</AutoLabel>
            </FormRow>
            <FormRow>
                <PlainLabel $w={148} $b>Наименование</PlainLabel>
                <Field/>
            </FormRow>
            <FormRow>
                <PlainLabel $w={148} $b>Проект</PlainLabel>
                <RefField>
                    <svg width="14" height="13" viewBox="0 0 14 13"><rect x=".5" y=".5" width="13" height="12" fill="#4aa82a" stroke="#2a6a1a"/></svg>
                    <RefText>[ПИР-20184] Реконструкция ОКС здание по ул Свободы, 278, в г. Омск</RefText>
                    <RefArrow><Tri/></RefArrow>
                </RefField>
                <DotsButton>...</DotsButton>
                <IconButton $ml={7}><TreeSearch w={16} h={16}/></IconButton>
            </FormRow>
            <FormRow>
                <PlainLabel $w={148}>Дата загрузки в систему</PlainLabel>
                <Field $w={170}>25.02.2025 14:05:04</Field>
                <AttachLink>Прикреплено файлов 1</AttachLink>
                <IconButton $ml={9}>
                    <svg width="14" height="16" viewBox="0 0 14 16"><rect x=".5" y=".5" width="11" height="14" fill="#777" stroke="#333"/><path d="M4 1v7a1.500 1.500 0 0 0 3 0V1" fill="none" stroke="#eee"/><circle cx="10.500" cy="12.500" r="3" fill="#ddd" stroke="#333"/></svg>
                </IconButton>
            </FormRow>
            <FormRow>
                <PlainLabel $w={148}>Дата выгрузки из системы</PlainLabel>
                <Field $w={170}>25.02.2025 14:07:45</Field>
            </FormRow>
            <FormRow>
                <PlainLabel $w={148}>Планируемая дата ответа</PlainLabel>
                <Field $w={170}>28.02.2025</Field>
            </FormRow>
            <SenderGroup>
                <SenderLegend>Данные отправителя</SenderLegend>
                <FormRow>
                    <PlainLabel $w={140}>Рег. №</PlainLabel>
                    <Field $w={134}>2</Field>
                    <FromLabel>от</FromLabel>
                    <Field $w={317}>25.02.2025 00:00:00</Field>
                </FormRow>
                <FormRow>
                    <PlainLabel $w={140} $b>Контрагент</PlainLabel>
                    <RefField>
                        <svg width="14" height="17" viewBox="0 0 14 17"><rect x="1" y="2" width="12" height="15" fill="#777"/><rect x="6" y="0" width="2" height="3" fill="#777"/><path d="M3 5h2M9 5h2M3 8h2M9 8h2M3 11h2M9 11h2" stroke="#ddd" strokeWidth="1.500"/></svg>
                        <RefText>ООО "Заказчик", ИНН 0000000000</RefText>
                        <RefArrow><Tri/></RefArrow>
                    </RefField>
                    <DotsButton>...</DotsButton>
                </FormRow>
                <FormRow>
                    <PlainLabel $w={140}>Подписал</PlainLabel>
                    <NameField>Ласточкина Л. М., Помощник ГИПа</NameField>
                </FormRow>
                <LetterRow>
                    <FormLabel $w={140}>Текст сопроводительного письма:</FormLabel>
                    <LetterBox>Текст: ...</LetterBox>
                </LetterRow>
            </SenderGroup>
        </FormCard>
    );
}

function PropertiesPane() {
    return (
        <PropsPane>
            <DockHeader $blue={false}>
                <DockTitle>Свойства объекта</DockTitle>
                <Caret $s={4} $c="#f4f4f4"/>
                <Pin c="#f4f4f4"/>
                <Cross s={9} c="#f4f4f4"/>
            </DockHeader>
            <SubHeader>
                <Package/>
                <SubTitle>ВхПДЭ №1 от 25.02.2025, ПИР-20184</SubTitle>
                <SubState>Зарегистрировано</SubState>
                <DocScroll/>
                <SubCaret><Caret $s={3} $c="#f4f4f4"/></SubCaret>
            </SubHeader>
            <PropsBody>
                <CardColumn>
                    <CardForm/>
                    <CardTabs>
                        <CardTab $w={73} $on>Карточка</CardTab>
                        <CardTab $w={159}>Прикреплённые файлы</CardTab>
                    </CardTabs>
                </CardColumn>
                <SideBar>
                    <SideButton $on><CardIcon/></SideButton>
                    <SideButton><Magnifier/></SideButton>
                    <SideButton><LinkIcon/></SideButton>
                    <SideButton><KeyIcon/></SideButton>
                    <SideButton><PenIcon/></SideButton>
                    <SideButton><BooksIcon/></SideButton>
                    <SideButton><FolderGear/></SideButton>
                </SideBar>
            </PropsBody>
        </PropsPane>
    );
}

export default function App() {
    return (
        <Window>
            <GlobalStyle/>
            <TitleBar>
                <FarvaterLogo s={15}/>
                <TitleText>Страусова С. Т., ГИП (ОУП Офис управления проектами) - TDMS Фарватер (пользователь Страусова Светлана Тарасовна)</TitleText>
                <WinButton $mr={0}><svg width="10" height="10" stroke="#8a8a8a"><path d="M0 5.500H10"/></svg></WinButton>
                <WinButton $mr={0}><svg width="11" height="11" stroke="#8a8a8a" fill="none"><rect x=".5" y=".5" width="10" height="10"/></svg></WinButton>
                <WinButton $mr={1}><Cross s={11} c="#8a8a8a" w={1}/></WinButton>
            </TitleBar>
            <MenuBar>
                <span>Файл</span>
                <span>Редактировать</span>
                <span>Вид</span>
                <span>Почта</span>
                <span>Справка</span>
            </MenuBar>
            <Toolbars/>
            <Main>
                <LeftPanel>
                    <DockHeader $blue>
                        <DockTitle>Дерево объектов</DockTitle>
                        <Caret $s={4} $c="#fff"/>
                        <Pin c="#fff"/>
                        <Cross s={9} c="#fff"/>
                    </DockHeader>
                    <Tree/>
                </LeftPanel>
                <RightPanel>
                    <ContentPane/>
                    <PropertiesPane/>
                </RightPanel>
            </Main>
            <StatusBar>
                <StatusCell $w={434}/>
                <StatusCell $w={260}/>
                <SizeGrip>
                    <svg width="11" height="11" fill="#b5b5b5"><rect x="8" y="0" width="2" height="2"/><rect x="4" y="4" width="2" height="2"/><rect x="8" y="4" width="2" height="2"/><rect x="0" y="8" width="2" height="2"/><rect x="4" y="8" width="2" height="2"/><rect x="8" y="8" width="2" height="2"/></svg>
                </SizeGrip>
            </StatusBar>
            <Dialog>
                <DialogTitle>
                    TDMS Фарватер
                    <Cross s={11} c="#111" w={1}/>
                </DialogTitle>
                <DialogBody>Замечания загружены. Требуется подготовить ответы на замечания.</DialogBody>
                <DialogFooter><OkButton>OK</OkButton></DialogFooter>
            </Dialog>
        </Window>
    );
}
